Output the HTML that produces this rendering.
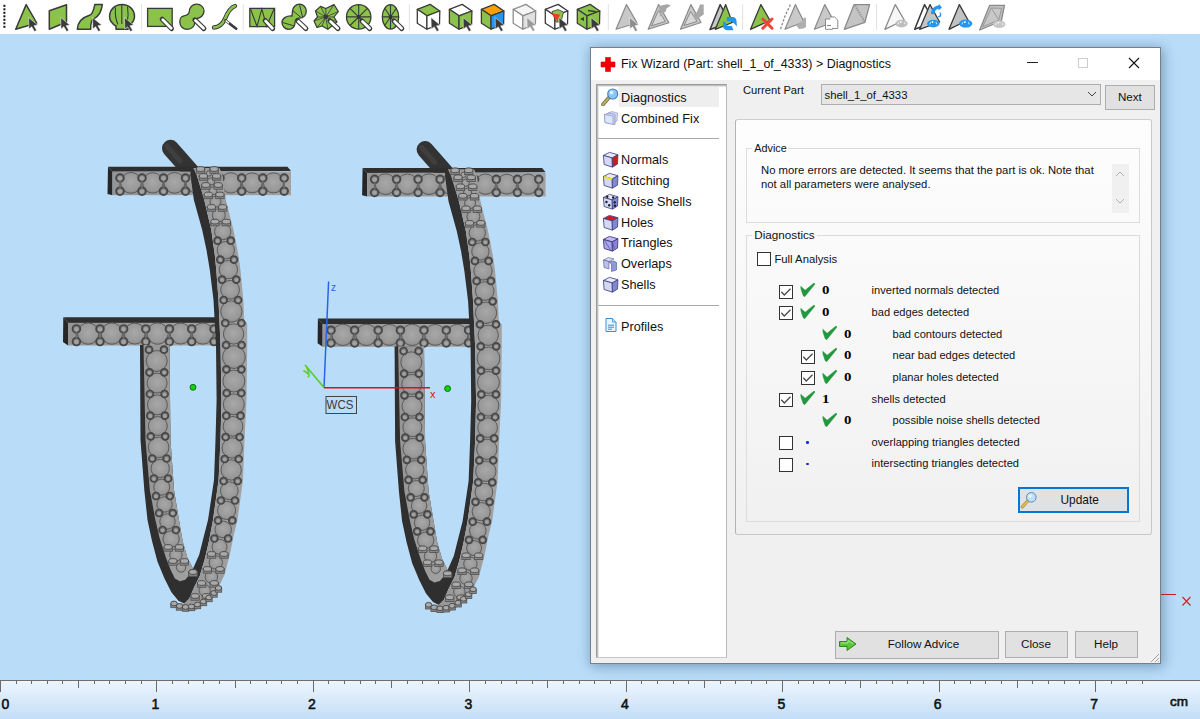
<!DOCTYPE html>
<html><head><meta charset="utf-8">
<style>
*{margin:0;padding:0;box-sizing:border-box}
html,body{width:1200px;height:719px;overflow:hidden;background:#B9DDF9;font-family:"Liberation Sans",sans-serif;color:#000}
.a{position:absolute}
#tb{left:0;top:0;width:1200px;height:34px;background:#fff}
#vp{left:0;top:34px;width:1200px;height:646px}
#ruler{left:0;top:680px;width:1200px;height:39px;background:linear-gradient(#E9F3FC,#D2E7F9 60%,#C3E0F8)}
.t{position:absolute;white-space:nowrap;line-height:1}
.btn{position:absolute;background:#E1E1E1;border:1px solid #ADADAD}
.cb{position:absolute;width:14px;height:14px;border:1px solid #333;background:#fff}
</style></head><body>
<svg class="a" style="left:0;top:0" width="1200" height="34" viewBox="0 0 1200 34"><rect width="1200" height="34" fill="#fff"/><rect x="3.4" y="4.8" width="2" height="2" fill="#111"/><rect x="3.4" y="8.3" width="2" height="2" fill="#111"/><rect x="3.4" y="11.8" width="2" height="2" fill="#111"/><rect x="3.4" y="15.3" width="2" height="2" fill="#111"/><rect x="3.4" y="18.8" width="2" height="2" fill="#111"/><rect x="3.4" y="22.3" width="2" height="2" fill="#111"/><rect x="3.4" y="25.8" width="2" height="2" fill="#111"/><path d="M26.15 4.6L36.75 23L15.75 29.3Z" fill="#8BC34A" stroke="#3A3A3A" stroke-width="1.5" stroke-linejoin="round"/><path d="M28.6 17.5L28.9 29.1L31.7 26.7L34.5 31.5L36.7 30.3L34.0 25.7L37.8 25.1Z" fill="#3A3A3A" stroke="#fff" stroke-width="0.5" stroke-linejoin="round"/><path d="M49.3 10.8L66.5 4.7L66.5 22L49.3 29.3Z" fill="#8BC34A" stroke="#3A3A3A" stroke-width="1.5" stroke-linejoin="round"/><path d="M60.7 17.5L61.0 29.1L63.8 26.7L66.6 31.5L68.8 30.3L66.1 25.7L69.9 25.1Z" fill="#3A3A3A" stroke="#fff" stroke-width="0.5" stroke-linejoin="round"/><path d="M77.3 29.3C77.6 22 82 17.5 89.5 15.2C93 14 94 8.5 94.8 4.6L102.3 4.6C101.5 11.5 98.5 16.5 93.5 19.2C91 20.5 90.6 25 90.7 29.3Z" fill="#8BC34A" stroke="#3A3A3A" stroke-width="1.5" stroke-linejoin="round"/><path d="M92.5 17.5L92.8 29.1L95.6 26.7L98.4 31.5L100.6 30.3L97.9 25.7L101.7 25.1Z" fill="#3A3A3A" stroke="#fff" stroke-width="0.5" stroke-linejoin="round"/><path d="M116 29.3L116 26C111.5 23.5 109.6 19.5 109.6 16.5C109.6 9.5 115 4.5 122 4.5C129 4.5 134.5 9.5 134.5 16.5C134.5 20 132.5 23.5 128.3 26L128.3 29.3Z" fill="#8BC34A" stroke="#3A3A3A" stroke-width="1.5" stroke-linejoin="round"/><path d="M115.5 7.5Q114.5 17 118 24.5M121.8 5V24M127.5 6.5Q129 15 127 23.5" stroke="#3A3A3A" stroke-width="1.1" fill="none"/><path d="M124.5 17.5L124.8 29.1L127.6 26.7L130.4 31.5L132.6 30.3L129.9 25.7L133.7 25.1Z" fill="#3A3A3A" stroke="#fff" stroke-width="0.5" stroke-linejoin="round"/><rect x="141.0" y="4" width="1" height="26" fill="#E3E3E3"/><rect x="147.6" y="8.4" width="24.6" height="18" fill="#8BC34A" stroke="#3A3A3A" stroke-width="1.3"/><path d="M162.2 19.2L171.5 28.6" stroke="#3A3A3A" stroke-width="5" stroke-linecap="round"/><path d="M162.8 19.8L171.2 28.3" stroke="#fff" stroke-width="2.8" stroke-linecap="round"/><path d="M184 15.8C180 16.5 179.8 19 179.8 22C179.8 26.3 183 29.3 187.3 29.3C191.8 29.3 195 26 194.8 22C194.8 19.5 195.5 18.6 197 18.5C201 18 204 15 204 11.1C204 7 200.8 4.2 196.6 4.2C192.5 4.2 189.4 7.2 189.3 11.3C189.2 14 188 15.3 184 15.8Z" fill="#8BC34A" stroke="#3A3A3A" stroke-width="1.3"/><path d="M194.89999999999998 19.9L203.9 28.6" stroke="#3A3A3A" stroke-width="5" stroke-linecap="round"/><path d="M195.5 20.5L203.6 28.3" stroke="#fff" stroke-width="2.8" stroke-linecap="round"/><path d="M214 27.5C220 27.5 222.5 24 224.8 19.3C227 13.5 229.5 8 235 6" stroke="#3A3A3A" stroke-width="4.4" stroke-linecap="round" fill="none"/><path d="M214 27.5C220 27.5 222.5 24 224.8 19.3C227 13.5 229.5 8 235 6" stroke="#8BC34A" stroke-width="2.4" stroke-linecap="round" fill="none"/><path d="M225.4 20.4L236.2 28.8" stroke="#3A3A3A" stroke-width="2.6" stroke-linecap="round"/><path d="M225.6 20.6L229 23.3" stroke="#fff" stroke-width="1.4"/><rect x="242.7" y="4" width="1" height="26" fill="#E3E3E3"/><rect x="249.8" y="8.4" width="24.8" height="18.2" fill="#8BC34A" stroke="#3A3A3A" stroke-width="1.3"/><path d="M250.5 9L257 26.3L261.8 9L266.7 26.3L274 9" stroke="#3A3A3A" stroke-width="1.1" fill="none"/><path d="M265.09999999999997 20.5L272.7 28.6" stroke="#3A3A3A" stroke-width="5" stroke-linecap="round"/><path d="M265.7 21.1L272.4 28.3" stroke="#fff" stroke-width="2.8" stroke-linecap="round"/><path d="M292 16C287 15.5 282 18 282 22.5C282 26.3 285 29.3 288.6 29.3C292.8 29.3 295.2 26 295 22.5C295 20 296 18.2 299.5 18.2C303.5 18.2 306.3 15 306.3 11.1C306.3 7.2 303.3 4.2 299.5 4.2C295.7 4.2 292.7 7.2 292.5 11Z" fill="#8BC34A" stroke="#3A3A3A" stroke-width="1.3"/><path d="M282.5 22.5L294.5 26M292.7 10.5L301 17.5M299.5 4.5L302.5 17" stroke="#3A3A3A" stroke-width="1" fill="none"/><path d="M297.8 21.0L305.9 28.6" stroke="#3A3A3A" stroke-width="5" stroke-linecap="round"/><path d="M298.40000000000003 21.6L305.59999999999997 28.3" stroke="#fff" stroke-width="2.8" stroke-linecap="round"/><path d="M315.5 11L320.5 6.4L325.8 8.5L334 4.6L338.4 11.5L334 17L337 22L332.5 25.5L327.8 29.3L322 26L317 27.5L314 21L317.5 17Z" fill="#8BC34A" stroke="#3A3A3A" stroke-width="1.2" stroke-linejoin="round"/><path d="M325.8 16.9L315.5 11" stroke="#3A3A3A" stroke-width="0.8"/><path d="M325.8 16.9L320.5 6.4" stroke="#3A3A3A" stroke-width="0.8"/><path d="M325.8 16.9L325.8 8.5" stroke="#3A3A3A" stroke-width="0.8"/><path d="M325.8 16.9L334 4.6" stroke="#3A3A3A" stroke-width="0.8"/><path d="M325.8 16.9L338.4 11.5" stroke="#3A3A3A" stroke-width="0.8"/><path d="M325.8 16.9L334 17" stroke="#3A3A3A" stroke-width="0.8"/><path d="M325.8 16.9L337 22" stroke="#3A3A3A" stroke-width="0.8"/><path d="M325.8 16.9L327.8 29.3" stroke="#3A3A3A" stroke-width="0.8"/><path d="M325.8 16.9L322 26" stroke="#3A3A3A" stroke-width="0.8"/><path d="M325.8 16.9L317 27.5" stroke="#3A3A3A" stroke-width="0.8"/><path d="M325.8 16.9L314 21" stroke="#3A3A3A" stroke-width="0.8"/><path d="M325.8 16.9L317.5 17" stroke="#3A3A3A" stroke-width="0.8"/><circle cx="325.8" cy="16.9" r="2.3" fill="#3A3A3A"/><path d="M329.9 21.0L338 28.6" stroke="#3A3A3A" stroke-width="5" stroke-linecap="round"/><path d="M330.5 21.6L337.7 28.3" stroke="#fff" stroke-width="2.8" stroke-linecap="round"/><circle cx="358.7" cy="16.9" r="12.2" fill="#8BC34A" stroke="#3A3A3A" stroke-width="1.3"/><path d="M346.5 16.9H370.9M358.7 4.7V29.1M350 8.3L367.4 25.5M367.4 8.3L350 25.5" stroke="#3A3A3A" stroke-width="1.1"/><rect x="357" y="15.2" width="3.4" height="3.4" fill="#333"/><path d="M361.9 21.0L369.8 28.6" stroke="#3A3A3A" stroke-width="5" stroke-linecap="round"/><path d="M362.5 21.6L369.5 28.3" stroke="#fff" stroke-width="2.8" stroke-linecap="round"/><ellipse cx="390.5" cy="16.9" rx="8.2" ry="12.2" fill="#8BC34A" stroke="#3A3A3A" stroke-width="1.3"/><path d="M382.3 16.9H398.7M390.5 4.7V29.1M384.7 8.3L396.3 25.5M396.3 8.3L384.7 25.5" stroke="#3A3A3A" stroke-width="1.1"/><rect x="388.8" y="15.2" width="3.4" height="3.4" fill="#333"/><path d="M394.0 21.0L401.8 28.6" stroke="#3A3A3A" stroke-width="5" stroke-linecap="round"/><path d="M394.6 21.6L401.5 28.3" stroke="#fff" stroke-width="2.8" stroke-linecap="round"/><rect x="408.9" y="4" width="1" height="26" fill="#E3E3E3"/><path d="M417.3 9.3L430.1 4.4L439.8 11.0L426.9 15.8Z" fill="#8BC34A" stroke="#3A3A3A" stroke-width="1.3" stroke-linejoin="round"/><path d="M417.3 9.3L426.9 15.8L426.9 29.2L417.3 23.3Z" fill="#fff" stroke="#3A3A3A" stroke-width="1.3" stroke-linejoin="round"/><path d="M426.9 15.8L439.8 11.0L439.5 24.5L426.9 29.2Z" fill="#fff" stroke="#3A3A3A" stroke-width="1.3" stroke-linejoin="round"/><path d="M431.0 17.5L431.3 29.1L434.1 26.7L436.9 31.5L439.1 30.3L436.4 25.7L440.2 25.1Z" fill="#3A3A3A" stroke="#fff" stroke-width="0.5" stroke-linejoin="round"/><path d="M449.4 9.3L462.2 4.4L471.9 11.0L459.0 15.8Z" fill="#fff" stroke="#3A3A3A" stroke-width="1.3" stroke-linejoin="round"/><path d="M449.4 9.3L459.0 15.8L459.0 29.2L449.4 23.3Z" fill="#8BC34A" stroke="#3A3A3A" stroke-width="1.3" stroke-linejoin="round"/><path d="M459.0 15.8L471.9 11.0L471.6 24.5L459.0 29.2Z" fill="#8BC34A" stroke="#3A3A3A" stroke-width="1.3" stroke-linejoin="round"/><path d="M463.1 17.5L463.4 29.1L466.2 26.7L469.0 31.5L471.2 30.3L468.5 25.7L472.3 25.1Z" fill="#3A3A3A" stroke="#fff" stroke-width="0.5" stroke-linejoin="round"/><path d="M481.4 9.3L494.2 4.4L503.9 11.0L491.0 15.8Z" fill="#F7A000" stroke="#3A3A3A" stroke-width="1.3" stroke-linejoin="round"/><path d="M481.4 9.3L491.0 15.8L491.0 29.2L481.4 23.3Z" fill="#8BC34A" stroke="#3A3A3A" stroke-width="1.3" stroke-linejoin="round"/><path d="M491.0 15.8L503.9 11.0L503.6 24.5L491.0 29.2Z" fill="#2196F3" stroke="#3A3A3A" stroke-width="1.3" stroke-linejoin="round"/><path d="M495.1 17.5L495.4 29.1L498.2 26.7L501.0 31.5L503.2 30.3L500.5 25.7L504.3 25.1Z" fill="#3A3A3A" stroke="#fff" stroke-width="0.5" stroke-linejoin="round"/><path d="M513.2 9.3L526.0 4.4L535.7 11.0L522.8 15.8Z" fill="#F6F6F6" stroke="#8E8E8E" stroke-width="1.3" stroke-linejoin="round"/><path d="M513.2 9.3L522.8 15.8L522.8 29.2L513.2 23.3Z" fill="#fff" stroke="#8E8E8E" stroke-width="1.3" stroke-linejoin="round"/><path d="M522.8 15.8L535.7 11.0L535.4 24.5L522.8 29.2Z" fill="#E0E0E0" stroke="#8E8E8E" stroke-width="1.3" stroke-linejoin="round"/><path d="M526.9 17.5L527.2 29.1L530.0 26.7L532.8 31.5L535.0 30.3L532.3 25.7L536.1 25.1Z" fill="#9A9A9A" stroke="#fff" stroke-width="0.5" stroke-linejoin="round"/><path d="M545.3 9.3L558.1 4.4L567.8 11.0L554.9 15.8Z" fill="#fff" stroke="#3A3A3A" stroke-width="1.3" stroke-linejoin="round"/><path d="M545.3 9.3L554.9 15.8L554.9 29.2L545.3 23.3Z" fill="#fff" stroke="#3A3A3A" stroke-width="1.3" stroke-linejoin="round"/><path d="M554.9 15.8L567.8 11.0L567.5 24.5L554.9 29.2Z" fill="#fff" stroke="#3A3A3A" stroke-width="1.3" stroke-linejoin="round"/><path d="M552 11.5L558 9.6L563.5 12L561 22L556 22Z" fill="#8BC34A" stroke="#3A3A3A" stroke-width="0.8"/><path d="M551.5 13.5L560 14.5L557.5 21.5Z" fill="#F03A2A"/><path d="M559.0 17.5L559.3 29.1L562.1 26.7L564.9 31.5L567.1 30.3L564.4 25.7L568.2 25.1Z" fill="#3A3A3A" stroke="#fff" stroke-width="0.5" stroke-linejoin="round"/><path d="M577.3 9.3L590.1 4.4L599.8 11.0L586.9 15.8Z" fill="#8BC34A" stroke="#3A3A3A" stroke-width="1.3" stroke-linejoin="round"/><path d="M577.3 9.3L586.9 15.8L586.9 29.2L577.3 23.3Z" fill="#8BC34A" stroke="#3A3A3A" stroke-width="1.3" stroke-linejoin="round"/><path d="M586.9 15.8L599.8 11.0L599.5 24.5L586.9 29.2Z" fill="#8BC34A" stroke="#3A3A3A" stroke-width="1.3" stroke-linejoin="round"/><path d="M588 10.5L596 11.8" stroke="#3A3A3A" stroke-width="1.5"/><path d="M580 19L584 17L584 21Z" fill="#3A3A3A"/><path d="M591.0 17.5L591.3 29.1L594.1 26.7L596.9 31.5L599.1 30.3L596.4 25.7L600.2 25.1Z" fill="#3A3A3A" stroke="#fff" stroke-width="0.5" stroke-linejoin="round"/><rect x="607.8" y="4" width="1" height="26" fill="#E3E3E3"/><path d="M626.5 4.6L637.1 23L616.1 29.3Z" fill="#C8C8C8" stroke="#8A8A8A" stroke-width="1.2" stroke-linejoin="round"/><path d="M629.5 17.5L629.8 29.1L632.6 26.7L635.4 31.5L637.6 30.3L634.9 25.7L638.7 25.1Z" fill="#8C8C8C" stroke="#fff" stroke-width="0.5" stroke-linejoin="round"/><path d="M658.6 4.6L668.9000000000001 22.8L648.2 29.3Z" fill="#C8C8C8" stroke="#8A8A8A" stroke-width="1.2" stroke-linejoin="round"/><path d="M651.5 25.8L658.6 10.5L665.4 21.5Z" fill="#D8D8D8" stroke="#8A8A8A" stroke-width="1"/><path d="M659 6L667 4.3L671 5.2L666.5 8.5L665.5 12L661.5 13L660 17Z" fill="#A6A6A6"/><path d="M690.9 4.6L701.0 22.5L680.5 29.3Z" fill="#C8C8C8" stroke="#8A8A8A" stroke-width="1.2" stroke-linejoin="round"/><path d="M684 25.5L690.6 11.5L697 21.5Z" fill="#D8D8D8" stroke="#8A8A8A" stroke-width="1"/><path d="M692.5 15.5L697 12L700 4.5L703.7 4.5L703.7 14.5L700 17L696 20Z" fill="#A8A8A8"/><path d="M720.2 4.6L730 22.5L710 29.5Z" fill="#C8C8C8" stroke="#3A3A3A" stroke-width="1.5" stroke-linejoin="round"/><path d="M725.6999999999999 4.6L732.3 22.5L715.3 29.3Z" fill="#8BC34A" stroke="#3A3A3A" stroke-width="1.3" stroke-linejoin="round"/><path d="M726.7 17H732.5C735.5 17 736.8 19.5 736.6 22.3L737 26.3L733.2 22.8L731.8 21.3H726.7Z" fill="#2196F3"/><path d="M723.2 21.3L726 22.8C726 24.6 727 26 729 26H731.8L733.5 30.2H727.5C724.3 30.2 722.9 28 723 25Z" fill="#2196F3"/><rect x="742.1" y="4" width="1" height="26" fill="#E3E3E3"/><path d="M760.9 4.6L770.0 20.5L750.5 29.3Z" fill="#8BC34A" stroke="#3A3A3A" stroke-width="1.3" stroke-linejoin="round"/><path d="M762.8 19L772 28.2M772 19L762.8 28.2" stroke="#F0443A" stroke-width="3" stroke-linecap="round"/><path d="M790.4 4.6L785 16L780.5 29.3" stroke="#8A8A8A" stroke-width="1.3" stroke-dasharray="2.4 1.6" fill="none"/><path d="M795.4 4.6L804 22L785 29.3Z" fill="#C9C9C9" stroke="#8A8A8A" stroke-width="1.2" stroke-linejoin="round"/><path d="M796.5 26L802 21L804 17.5L806 18L806 27L803.5 28.5L799 29Z" fill="#AFAFAF"/><path d="M824.8 4.6L834.4 22L814.4 29.3Z" fill="#C8C8C8" stroke="#8A8A8A" stroke-width="1.2" stroke-linejoin="round"/><path d="M825.5 19H831L832.5 20.5V29.3H825.5Z" fill="#fff" stroke="#8A8A8A" stroke-width="1"/><path d="M830 17H834.5L837.8 20V28.5H832.5" fill="#fff" stroke="#8A8A8A" stroke-width="1"/><path d="M827 25.5H831" stroke="#8A8A8A" stroke-width="1.2"/><path d="M854.1 4.6L869.6 4.6L864.9 22.3L844.3 29.3Z" fill="#C4C4C4" stroke="#8A8A8A" stroke-width="1.3" stroke-linejoin="round"/><path d="M855 5.5L864.5 21.5" stroke="#9A9A9A" stroke-width="2.2" stroke-dasharray="1.5 1"/><rect x="876.0" y="4" width="1" height="26" fill="#E3E3E3"/><path d="M895.3 4.6L904.1999999999999 20L884.9 29.3Z" fill="#F7F7F7" stroke="#8A8A8A" stroke-width="1.3" stroke-linejoin="round"/><ellipse cx="901.5" cy="23.6" rx="6.2" ry="3.8" fill="#BDBDBD"/><path d="M898.0 24.400000000000002Q898.3 22.6 899.0 22.1M905.0 24.400000000000002Q904.7 22.6 904.0 22.1" stroke="#fff" stroke-width="0.8" fill="none"/><circle cx="900.7" cy="22.0" r="0.9" fill="#fff"/><path d="M924.6 4.6L934 22L914.7 29.3Z" fill="#fff" stroke="#3A3A3A" stroke-width="1.5" stroke-linejoin="round"/><path d="M930.0 4.6L939.6 22L919.6 29.3Z" fill="#C4C4C4" stroke="#3A3A3A" stroke-width="1.3" stroke-linejoin="round"/><path d="M931 14C931 9 934.5 6 938.5 5.5L939 4L942 7.5L938.5 10.5L938.5 8.8C936 9.2 934.5 11 934.5 14Z" fill="#2196F3"/><path d="M939.5 12C941.5 12.5 942 14.5 940.5 17L937 17.5L940 15Z" fill="#2196F3"/><ellipse cx="933.3" cy="23.6" rx="6.2" ry="3.8" fill="#2196F3"/><path d="M929.8 24.400000000000002Q930.0999999999999 22.6 930.8 22.1M936.8 24.400000000000002Q936.5 22.6 935.8 22.1" stroke="#fff" stroke-width="0.8" fill="none"/><circle cx="932.5" cy="22.0" r="0.9" fill="#fff"/><path d="M959.4 4.6L968 20L949 29.3Z" fill="#C2C2C2" stroke="#3A3A3A" stroke-width="1.3" stroke-linejoin="round"/><ellipse cx="965.7" cy="23.6" rx="6.6" ry="4" fill="#2196F3"/><path d="M962.2 24.400000000000002Q962.5 22.6 963.2 22.1M969.2 24.400000000000002Q968.9000000000001 22.6 968.2 22.1" stroke="#fff" stroke-width="0.8" fill="none"/><circle cx="964.9000000000001" cy="22.0" r="0.9" fill="#fff"/><path d="M989.6 5.4L1004.5 5.4L1001.3 21L979.7 30Z" fill="#C0C0C0" stroke="#8A8A8A" stroke-width="1.3" stroke-linejoin="round"/><path d="M991.3 8L1001.6 8.4L998.8 20L982.8 26.5Z" fill="#C8C8C8" stroke="#9A9A9A" stroke-width="1"/><path d="M991.3 8L998.8 20" stroke="#9A9A9A" stroke-width="1"/><ellipse cx="999.2" cy="24.2" rx="6.2" ry="3.8" fill="#C6C6C6"/><path d="M995.7 25.0Q996.0 23.2 996.7 22.7M1002.7 25.0Q1002.4000000000001 23.2 1001.7 22.7" stroke="#fff" stroke-width="0.8" fill="none"/><circle cx="998.4000000000001" cy="22.599999999999998" r="0.9" fill="#fff"/></svg>
<svg id="vp" class="a" width="1200" height="646" viewBox="0 34 1200 646"><defs><linearGradient id="face" x1="0" y1="0" x2="1" y2="0"><stop offset="0" stop-color="#959595"/><stop offset="1" stop-color="#A2A2A2"/></linearGradient><radialGradient id="bead" cx="0.5" cy="0.45" r="0.62"><stop offset="0" stop-color="#A8A8A8"/><stop offset="0.7" stop-color="#989898"/><stop offset="1" stop-color="#7C7C7C"/></radialGradient></defs><g id="e1"><path d="M170.5 148.3L194 175" stroke="#333" stroke-width="17" stroke-linecap="round"/>
<path d="M167 146L180 161" stroke="#484848" stroke-width="5" stroke-linecap="round" opacity="0.6"/>
<path d="M108 166.8L287.5 166.8L291 171L112.5 171.8Z" fill="#2E2E2E"/>
<path d="M108 166.8L112.5 171.8L112.5 195.3L107.5 194Z" fill="#262626"/>
<rect x="112.5" y="171.6" width="178.5" height="23.6" fill="url(#face)"/>
<circle cx="131.0" cy="182.9" r="10.4" fill="url(#bead)" stroke="#555" stroke-width="0.9"/><circle cx="152.8" cy="182.9" r="10.2" fill="url(#bead)" stroke="#555" stroke-width="0.9"/><circle cx="174.5" cy="182.9" r="10.4" fill="url(#bead)" stroke="#555" stroke-width="0.9"/><circle cx="196.2" cy="182.9" r="10.2" fill="url(#bead)" stroke="#555" stroke-width="0.9"/><circle cx="213.5" cy="182.9" r="5.9" fill="url(#bead)" stroke="#555" stroke-width="0.9"/><circle cx="230.8" cy="182.9" r="10.2" fill="url(#bead)" stroke="#555" stroke-width="0.9"/><circle cx="252.2" cy="182.9" r="10.0" fill="url(#bead)" stroke="#555" stroke-width="0.9"/><circle cx="273.5" cy="182.9" r="10.1" fill="url(#bead)" stroke="#555" stroke-width="0.9"/><circle cx="120.0" cy="178.0" r="3.9" fill="#767676" stroke="#474747" stroke-width="1.7"/><circle cx="120.0" cy="178.3" r="2.3" fill="#A2A2A2"/><circle cx="120.0" cy="191.2" r="3.9" fill="#767676" stroke="#474747" stroke-width="1.7"/><circle cx="120.0" cy="191.5" r="2.3" fill="#A2A2A2"/><rect x="119.2" y="181.0" width="1.6" height="7.2" fill="#6A6A6A"/><circle cx="142.0" cy="178.0" r="3.9" fill="#767676" stroke="#474747" stroke-width="1.7"/><circle cx="142.0" cy="178.3" r="2.3" fill="#A2A2A2"/><circle cx="142.0" cy="191.2" r="3.9" fill="#767676" stroke="#474747" stroke-width="1.7"/><circle cx="142.0" cy="191.5" r="2.3" fill="#A2A2A2"/><rect x="141.2" y="181.0" width="1.6" height="7.2" fill="#6A6A6A"/><circle cx="163.5" cy="178.0" r="3.9" fill="#767676" stroke="#474747" stroke-width="1.7"/><circle cx="163.5" cy="178.3" r="2.3" fill="#A2A2A2"/><circle cx="163.5" cy="191.2" r="3.9" fill="#767676" stroke="#474747" stroke-width="1.7"/><circle cx="163.5" cy="191.5" r="2.3" fill="#A2A2A2"/><rect x="162.7" y="181.0" width="1.6" height="7.2" fill="#6A6A6A"/><circle cx="185.5" cy="178.0" r="3.9" fill="#767676" stroke="#474747" stroke-width="1.7"/><circle cx="185.5" cy="178.3" r="2.3" fill="#A2A2A2"/><circle cx="185.5" cy="191.2" r="3.9" fill="#767676" stroke="#474747" stroke-width="1.7"/><circle cx="185.5" cy="191.5" r="2.3" fill="#A2A2A2"/><rect x="184.7" y="181.0" width="1.6" height="7.2" fill="#6A6A6A"/><circle cx="207.0" cy="178.0" r="3.9" fill="#767676" stroke="#474747" stroke-width="1.7"/><circle cx="207.0" cy="178.3" r="2.3" fill="#A2A2A2"/><circle cx="207.0" cy="191.2" r="3.9" fill="#767676" stroke="#474747" stroke-width="1.7"/><circle cx="207.0" cy="191.5" r="2.3" fill="#A2A2A2"/><rect x="206.2" y="181.0" width="1.6" height="7.2" fill="#6A6A6A"/><circle cx="220.0" cy="178.0" r="3.9" fill="#767676" stroke="#474747" stroke-width="1.7"/><circle cx="220.0" cy="178.3" r="2.3" fill="#A2A2A2"/><circle cx="220.0" cy="191.2" r="3.9" fill="#767676" stroke="#474747" stroke-width="1.7"/><circle cx="220.0" cy="191.5" r="2.3" fill="#A2A2A2"/><rect x="219.2" y="181.0" width="1.6" height="7.2" fill="#6A6A6A"/><circle cx="241.7" cy="178.0" r="3.9" fill="#767676" stroke="#474747" stroke-width="1.7"/><circle cx="241.7" cy="178.3" r="2.3" fill="#A2A2A2"/><circle cx="241.7" cy="191.2" r="3.9" fill="#767676" stroke="#474747" stroke-width="1.7"/><circle cx="241.7" cy="191.5" r="2.3" fill="#A2A2A2"/><rect x="240.9" y="181.0" width="1.6" height="7.2" fill="#6A6A6A"/><circle cx="262.8" cy="178.0" r="3.9" fill="#767676" stroke="#474747" stroke-width="1.7"/><circle cx="262.8" cy="178.3" r="2.3" fill="#A2A2A2"/><circle cx="262.8" cy="191.2" r="3.9" fill="#767676" stroke="#474747" stroke-width="1.7"/><circle cx="262.8" cy="191.5" r="2.3" fill="#A2A2A2"/><rect x="262.0" y="181.0" width="1.6" height="7.2" fill="#6A6A6A"/><circle cx="284.2" cy="178.0" r="3.9" fill="#767676" stroke="#474747" stroke-width="1.7"/><circle cx="284.2" cy="178.3" r="2.3" fill="#A2A2A2"/><circle cx="284.2" cy="191.2" r="3.9" fill="#767676" stroke="#474747" stroke-width="1.7"/><circle cx="284.2" cy="191.5" r="2.3" fill="#A2A2A2"/><rect x="283.4" y="181.0" width="1.6" height="7.2" fill="#6A6A6A"/>
<path d="M63.3 317.3L216 317.3L216 323L68 323Z" fill="#2E2E2E"/>
<path d="M63.3 317.3L68 323L68 345.5L63 342Z" fill="#262626"/>
<rect x="68" y="322.8" width="148" height="22.7" fill="url(#face)"/>
<circle cx="88.2" cy="333.6" r="10.7" fill="url(#bead)" stroke="#555" stroke-width="0.9"/><circle cx="111.8" cy="333.6" r="10.7" fill="url(#bead)" stroke="#555" stroke-width="0.9"/><circle cx="134.7" cy="333.6" r="10.5" fill="url(#bead)" stroke="#555" stroke-width="0.9"/><circle cx="157.6" cy="333.6" r="10.7" fill="url(#bead)" stroke="#555" stroke-width="0.9"/><circle cx="180.6" cy="333.6" r="10.5" fill="url(#bead)" stroke="#555" stroke-width="0.9"/><circle cx="202.8" cy="333.6" r="10.6" fill="url(#bead)" stroke="#555" stroke-width="0.9"/><circle cx="76.4" cy="328.9" r="3.9" fill="#767676" stroke="#474747" stroke-width="1.7"/><circle cx="76.4" cy="329.2" r="2.3" fill="#A2A2A2"/><circle cx="76.4" cy="341.6" r="3.9" fill="#767676" stroke="#474747" stroke-width="1.7"/><circle cx="76.4" cy="341.9" r="2.3" fill="#A2A2A2"/><rect x="75.6" y="331.9" width="1.6" height="6.7" fill="#6A6A6A"/><circle cx="100.0" cy="328.9" r="3.9" fill="#767676" stroke="#474747" stroke-width="1.7"/><circle cx="100.0" cy="329.2" r="2.3" fill="#A2A2A2"/><circle cx="100.0" cy="341.6" r="3.9" fill="#767676" stroke="#474747" stroke-width="1.7"/><circle cx="100.0" cy="341.9" r="2.3" fill="#A2A2A2"/><rect x="99.2" y="331.9" width="1.6" height="6.7" fill="#6A6A6A"/><circle cx="123.6" cy="328.9" r="3.9" fill="#767676" stroke="#474747" stroke-width="1.7"/><circle cx="123.6" cy="329.2" r="2.3" fill="#A2A2A2"/><circle cx="123.6" cy="341.6" r="3.9" fill="#767676" stroke="#474747" stroke-width="1.7"/><circle cx="123.6" cy="341.9" r="2.3" fill="#A2A2A2"/><rect x="122.8" y="331.9" width="1.6" height="6.7" fill="#6A6A6A"/><circle cx="145.8" cy="328.9" r="3.9" fill="#767676" stroke="#474747" stroke-width="1.7"/><circle cx="145.8" cy="329.2" r="2.3" fill="#A2A2A2"/><circle cx="145.8" cy="341.6" r="3.9" fill="#767676" stroke="#474747" stroke-width="1.7"/><circle cx="145.8" cy="341.9" r="2.3" fill="#A2A2A2"/><rect x="145.0" y="331.9" width="1.6" height="6.7" fill="#6A6A6A"/><circle cx="169.4" cy="328.9" r="3.9" fill="#767676" stroke="#474747" stroke-width="1.7"/><circle cx="169.4" cy="329.2" r="2.3" fill="#A2A2A2"/><circle cx="169.4" cy="341.6" r="3.9" fill="#767676" stroke="#474747" stroke-width="1.7"/><circle cx="169.4" cy="341.9" r="2.3" fill="#A2A2A2"/><rect x="168.6" y="331.9" width="1.6" height="6.7" fill="#6A6A6A"/><circle cx="191.7" cy="328.9" r="3.9" fill="#767676" stroke="#474747" stroke-width="1.7"/><circle cx="191.7" cy="329.2" r="2.3" fill="#A2A2A2"/><circle cx="191.7" cy="341.6" r="3.9" fill="#767676" stroke="#474747" stroke-width="1.7"/><circle cx="191.7" cy="341.9" r="2.3" fill="#A2A2A2"/><rect x="190.9" y="331.9" width="1.6" height="6.7" fill="#6A6A6A"/><circle cx="214.0" cy="328.9" r="3.9" fill="#767676" stroke="#474747" stroke-width="1.7"/><circle cx="214.0" cy="329.2" r="2.3" fill="#A2A2A2"/><circle cx="214.0" cy="341.6" r="3.9" fill="#767676" stroke="#474747" stroke-width="1.7"/><circle cx="214.0" cy="341.9" r="2.3" fill="#A2A2A2"/><rect x="213.2" y="331.9" width="1.6" height="6.7" fill="#6A6A6A"/>
<path d="M140.0 345.0 L140.5 440.0 L144.3 490.0 L147.5 520.0 L152.0 540.9 L157.5 561.7 L164.5 578.4 L171.4 592.3 L178.4 600.7 L185.3 604.1 L189.5 602.0 L189.5 597.9 L194.4 586.8 L199.9 575.6 L204.8 559.0 L209.0 540.9 L213.0 520.0 L218.6 480.0 L220.5 440.0 L221.5 400.0 L220.5 345.0 L218.5 300.0 L216.3 270.0 L214.8 255.0 L211.3 230.0 L204.3 200.0 L196.7 175.0 L193.3 168.0 L190.6 171.0 L190.6 171.0 L190.4 175.0 L193.9 200.0 L202.2 230.0 L206.5 250.0 L209.8 270.0 L213.5 300.0 L216.0 345.0 L216.6 400.0 L215.5 440.0 L214.0 480.0 L208.0 520.0 L203.4 538.0 L199.2 554.8 L193.0 568.7 L193.0 568.7 L187.4 557.5 L182.6 540.9 L179.0 520.0 L174.0 490.0 L170.5 440.0 L169.4 345.0 Z" fill="#2F2F2F"/>
<path d="M143.5 345.0 L145.5 440.0 L149.8 490.0 L155.4 520.0 L159.6 538.0 L165.9 557.5 L170.7 570.0 L174.9 578.4 L179.8 581.2 L185.3 579.8 L190.9 572.9 L193.0 568.7 L193.0 568.7 L187.4 557.5 L182.6 540.9 L179.0 520.0 L174.0 490.0 L170.5 440.0 L169.4 345.0 Z" fill="url(#face)"/>
<circle cx="156.7" cy="361.0" r="10.5" fill="url(#bead)" stroke="#555" stroke-width="0.9"/><circle cx="157.1" cy="383.1" r="10.0" fill="url(#bead)" stroke="#555" stroke-width="0.9"/><circle cx="157.4" cy="404.9" r="10.0" fill="url(#bead)" stroke="#555" stroke-width="0.9"/><circle cx="157.8" cy="426.0" r="9.5" fill="url(#bead)" stroke="#555" stroke-width="0.9"/><circle cx="158.6" cy="447.4" r="10.3" fill="url(#bead)" stroke="#555" stroke-width="0.9"/><circle cx="160.2" cy="468.5" r="9.2" fill="url(#bead)" stroke="#555" stroke-width="0.9"/><circle cx="161.7" cy="487.2" r="8.0" fill="url(#bead)" stroke="#555" stroke-width="0.9"/><circle cx="164.5" cy="504.5" r="7.7" fill="url(#bead)" stroke="#555" stroke-width="0.9"/><circle cx="167.5" cy="521.5" r="7.7" fill="url(#bead)" stroke="#555" stroke-width="0.9"/><circle cx="171.1" cy="539.0" r="8.2" fill="url(#bead)" stroke="#555" stroke-width="0.9"/><circle cx="175.9" cy="555.0" r="6.2" fill="url(#bead)" stroke="#555" stroke-width="0.9"/><circle cx="181.1" cy="567.5" r="4.7" fill="url(#bead)" stroke="#555" stroke-width="0.9"/><circle cx="149.0" cy="349.7" r="3.5" fill="#767676" stroke="#474747" stroke-width="1.7"/><circle cx="149.0" cy="350.0" r="1.9" fill="#A2A2A2"/><circle cx="164.0" cy="349.7" r="3.5" fill="#767676" stroke="#474747" stroke-width="1.7"/><circle cx="164.0" cy="350.0" r="1.9" fill="#A2A2A2"/><circle cx="149.5" cy="372.3" r="3.5" fill="#767676" stroke="#474747" stroke-width="1.7"/><circle cx="149.5" cy="372.6" r="1.9" fill="#A2A2A2"/><circle cx="164.3" cy="372.3" r="3.5" fill="#767676" stroke="#474747" stroke-width="1.7"/><circle cx="164.3" cy="372.6" r="1.9" fill="#A2A2A2"/><circle cx="149.9" cy="394.0" r="3.5" fill="#767676" stroke="#474747" stroke-width="1.7"/><circle cx="149.9" cy="394.3" r="1.9" fill="#A2A2A2"/><circle cx="164.6" cy="394.0" r="3.5" fill="#767676" stroke="#474747" stroke-width="1.7"/><circle cx="164.6" cy="394.3" r="1.9" fill="#A2A2A2"/><circle cx="150.3" cy="415.7" r="3.5" fill="#767676" stroke="#474747" stroke-width="1.7"/><circle cx="150.3" cy="416.0" r="1.9" fill="#A2A2A2"/><circle cx="164.9" cy="415.7" r="3.5" fill="#767676" stroke="#474747" stroke-width="1.7"/><circle cx="164.9" cy="416.0" r="1.9" fill="#A2A2A2"/><circle cx="150.7" cy="436.3" r="3.5" fill="#767676" stroke="#474747" stroke-width="1.7"/><circle cx="150.7" cy="436.6" r="1.9" fill="#A2A2A2"/><circle cx="165.2" cy="436.3" r="3.5" fill="#767676" stroke="#474747" stroke-width="1.7"/><circle cx="165.2" cy="436.6" r="1.9" fill="#A2A2A2"/><circle cx="152.3" cy="458.5" r="3.5" fill="#767676" stroke="#474747" stroke-width="1.7"/><circle cx="152.3" cy="458.8" r="1.9" fill="#A2A2A2"/><circle cx="166.6" cy="458.5" r="3.5" fill="#767676" stroke="#474747" stroke-width="1.7"/><circle cx="166.6" cy="458.8" r="1.9" fill="#A2A2A2"/><circle cx="153.9" cy="478.5" r="3.5" fill="#767676" stroke="#474747" stroke-width="1.7"/><circle cx="153.9" cy="478.8" r="1.9" fill="#A2A2A2"/><circle cx="168.1" cy="478.5" r="3.5" fill="#767676" stroke="#474747" stroke-width="1.7"/><circle cx="168.1" cy="478.8" r="1.9" fill="#A2A2A2"/><circle cx="156.0" cy="496.0" r="3.5" fill="#767676" stroke="#474747" stroke-width="1.7"/><circle cx="156.0" cy="496.3" r="1.9" fill="#A2A2A2"/><circle cx="169.9" cy="496.0" r="3.5" fill="#767676" stroke="#474747" stroke-width="1.7"/><circle cx="169.9" cy="496.3" r="1.9" fill="#A2A2A2"/><circle cx="159.1" cy="513.0" r="3.5" fill="#767676" stroke="#474747" stroke-width="1.7"/><circle cx="159.1" cy="513.3" r="1.9" fill="#A2A2A2"/><circle cx="172.8" cy="513.0" r="3.5" fill="#767676" stroke="#474747" stroke-width="1.7"/><circle cx="172.8" cy="513.3" r="1.9" fill="#A2A2A2"/><circle cx="162.6" cy="530.0" r="3.5" fill="#767676" stroke="#474747" stroke-width="1.7"/><circle cx="162.6" cy="530.3" r="1.9" fill="#A2A2A2"/><circle cx="175.9" cy="530.0" r="3.5" fill="#767676" stroke="#474747" stroke-width="1.7"/><circle cx="175.9" cy="530.3" r="1.9" fill="#A2A2A2"/><rect x="163.9" y="547.0" width="8.4" height="4.2" fill="#8A8A8A" stroke="#505050" stroke-width="0.8"/><ellipse cx="168.1" cy="547.0" rx="4.2" ry="2.4" fill="#A9A9A9" stroke="#4E4E4E" stroke-width="1"/><rect x="175.2" y="547.0" width="8.4" height="4.2" fill="#8A8A8A" stroke="#505050" stroke-width="0.8"/><ellipse cx="179.4" cy="547.0" rx="4.2" ry="2.4" fill="#A9A9A9" stroke="#4E4E4E" stroke-width="1"/><rect x="168.7" y="561.0" width="8.4" height="4.2" fill="#8A8A8A" stroke="#505050" stroke-width="0.8"/><ellipse cx="172.9" cy="561.0" rx="4.2" ry="2.4" fill="#A9A9A9" stroke="#4E4E4E" stroke-width="1"/><rect x="180.2" y="561.0" width="8.4" height="4.2" fill="#8A8A8A" stroke="#505050" stroke-width="0.8"/><ellipse cx="184.4" cy="561.0" rx="4.2" ry="2.4" fill="#A9A9A9" stroke="#4E4E4E" stroke-width="1"/><rect x="188.8" y="572.0" width="8.4" height="4.2" fill="#8A8A8A" stroke="#505050" stroke-width="0.8"/><ellipse cx="193.0" cy="572.0" rx="4.2" ry="2.4" fill="#A9A9A9" stroke="#4E4E4E" stroke-width="1"/><rect x="188.8" y="572.0" width="8.4" height="4.2" fill="#8A8A8A" stroke="#505050" stroke-width="0.8"/><ellipse cx="193.0" cy="572.0" rx="4.2" ry="2.4" fill="#A9A9A9" stroke="#4E4E4E" stroke-width="1"/>
<path d="M193.3 168.0 L196.7 175.0 L204.3 200.0 L211.3 230.0 L214.8 255.0 L216.3 270.0 L218.5 300.0 L220.5 345.0 L221.5 400.0 L220.5 440.0 L218.6 480.0 L213.0 520.0 L209.0 540.9 L204.8 559.0 L199.9 575.6 L194.4 586.8 L189.5 597.9 L184.0 603.5 L171.5 604.0 L177.0 609.0 L186.0 611.5 L196.0 610.0 L204.0 605.0 L211.0 598.0 L217.3 589.5 L224.3 575.6 L229.8 554.8 L234.0 533.9 L237.5 520.0 L243.0 480.0 L244.5 440.0 L246.5 400.0 L247.2 345.0 L247.2 323.0 L244.3 321.0 L243.3 300.0 L240.5 270.0 L238.4 255.0 L233.5 230.0 L225.9 200.0 L222.4 175.0 L219.5 168.0 Z" fill="url(#face)"/>
<circle cx="208.9" cy="173.5" r="2.7" fill="url(#bead)" stroke="#555" stroke-width="0.9"/><circle cx="211.0" cy="181.5" r="3.7" fill="url(#bead)" stroke="#555" stroke-width="0.9"/><circle cx="213.0" cy="190.8" r="4.0" fill="url(#bead)" stroke="#555" stroke-width="0.9"/><circle cx="215.5" cy="201.8" r="5.5" fill="url(#bead)" stroke="#555" stroke-width="0.9"/><circle cx="218.8" cy="215.3" r="6.5" fill="url(#bead)" stroke="#555" stroke-width="0.9"/><circle cx="222.7" cy="231.6" r="8.2" fill="url(#bead)" stroke="#555" stroke-width="0.9"/><circle cx="225.8" cy="250.2" r="8.7" fill="url(#bead)" stroke="#555" stroke-width="0.9"/><circle cx="228.4" cy="269.6" r="9.2" fill="url(#bead)" stroke="#555" stroke-width="0.9"/><circle cx="230.1" cy="289.8" r="9.4" fill="url(#bead)" stroke="#555" stroke-width="0.9"/><circle cx="231.4" cy="311.5" r="10.7" fill="url(#bead)" stroke="#555" stroke-width="0.9"/><circle cx="233.6" cy="334.0" r="10.2" fill="url(#bead)" stroke="#555" stroke-width="0.9"/><circle cx="233.9" cy="357.1" r="11.4" fill="url(#bead)" stroke="#555" stroke-width="0.9"/><circle cx="233.9" cy="381.1" r="11.0" fill="url(#bead)" stroke="#555" stroke-width="0.9"/><circle cx="233.8" cy="404.4" r="10.5" fill="url(#bead)" stroke="#555" stroke-width="0.9"/><circle cx="233.0" cy="426.4" r="9.9" fill="url(#bead)" stroke="#555" stroke-width="0.9"/><circle cx="232.2" cy="448.0" r="10.2" fill="url(#bead)" stroke="#555" stroke-width="0.9"/><circle cx="231.2" cy="470.0" r="10.2" fill="url(#bead)" stroke="#555" stroke-width="0.9"/><circle cx="229.3" cy="490.8" r="8.9" fill="url(#bead)" stroke="#555" stroke-width="0.9"/><circle cx="226.6" cy="510.4" r="9.1" fill="url(#bead)" stroke="#555" stroke-width="0.9"/><circle cx="223.2" cy="529.5" r="8.3" fill="url(#bead)" stroke="#555" stroke-width="0.9"/><circle cx="219.5" cy="546.8" r="7.5" fill="url(#bead)" stroke="#555" stroke-width="0.9"/><circle cx="215.8" cy="562.5" r="6.7" fill="url(#bead)" stroke="#555" stroke-width="0.9"/><circle cx="211.4" cy="577.0" r="6.2" fill="url(#bead)" stroke="#555" stroke-width="0.9"/><circle cx="204.7" cy="590.5" r="5.7" fill="url(#bead)" stroke="#555" stroke-width="0.9"/><rect x="196.3" y="169.0" width="8.4" height="4.2" fill="#8A8A8A" stroke="#505050" stroke-width="0.8"/><ellipse cx="200.5" cy="169.0" rx="4.2" ry="2.4" fill="#A9A9A9" stroke="#4E4E4E" stroke-width="1"/><rect x="209.9" y="169.0" width="8.4" height="4.2" fill="#8A8A8A" stroke="#505050" stroke-width="0.8"/><ellipse cx="214.1" cy="169.0" rx="4.2" ry="2.4" fill="#A9A9A9" stroke="#4E4E4E" stroke-width="1"/><rect x="199.2" y="176.0" width="8.4" height="4.2" fill="#8A8A8A" stroke="#505050" stroke-width="0.8"/><ellipse cx="203.4" cy="176.0" rx="4.2" ry="2.4" fill="#A9A9A9" stroke="#4E4E4E" stroke-width="1"/><rect x="212.4" y="176.0" width="8.4" height="4.2" fill="#8A8A8A" stroke="#505050" stroke-width="0.8"/><ellipse cx="216.6" cy="176.0" rx="4.2" ry="2.4" fill="#A9A9A9" stroke="#4E4E4E" stroke-width="1"/><rect x="201.6" y="185.0" width="8.4" height="4.2" fill="#8A8A8A" stroke="#505050" stroke-width="0.8"/><ellipse cx="205.8" cy="185.0" rx="4.2" ry="2.4" fill="#A9A9A9" stroke="#4E4E4E" stroke-width="1"/><rect x="214.0" y="185.0" width="8.4" height="4.2" fill="#8A8A8A" stroke="#505050" stroke-width="0.8"/><ellipse cx="218.2" cy="185.0" rx="4.2" ry="2.4" fill="#A9A9A9" stroke="#4E4E4E" stroke-width="1"/><rect x="204.1" y="194.5" width="8.4" height="4.2" fill="#8A8A8A" stroke="#505050" stroke-width="0.8"/><ellipse cx="208.3" cy="194.5" rx="4.2" ry="2.4" fill="#A9A9A9" stroke="#4E4E4E" stroke-width="1"/><rect x="215.7" y="194.5" width="8.4" height="4.2" fill="#8A8A8A" stroke="#505050" stroke-width="0.8"/><ellipse cx="219.9" cy="194.5" rx="4.2" ry="2.4" fill="#A9A9A9" stroke="#4E4E4E" stroke-width="1"/><rect x="207.2" y="207.0" width="8.4" height="4.2" fill="#8A8A8A" stroke="#505050" stroke-width="0.8"/><ellipse cx="211.4" cy="207.0" rx="4.2" ry="2.4" fill="#A9A9A9" stroke="#4E4E4E" stroke-width="1"/><rect x="218.5" y="207.0" width="8.4" height="4.2" fill="#8A8A8A" stroke="#505050" stroke-width="0.8"/><ellipse cx="222.7" cy="207.0" rx="4.2" ry="2.4" fill="#A9A9A9" stroke="#4E4E4E" stroke-width="1"/><rect x="210.7" y="221.6" width="8.4" height="4.2" fill="#8A8A8A" stroke="#505050" stroke-width="0.8"/><ellipse cx="214.9" cy="221.6" rx="4.2" ry="2.4" fill="#A9A9A9" stroke="#4E4E4E" stroke-width="1"/><rect x="222.1" y="221.6" width="8.4" height="4.2" fill="#8A8A8A" stroke="#505050" stroke-width="0.8"/><ellipse cx="226.3" cy="221.6" rx="4.2" ry="2.4" fill="#A9A9A9" stroke="#4E4E4E" stroke-width="1"/><circle cx="217.6" cy="240.7" r="3.5" fill="#767676" stroke="#474747" stroke-width="1.7"/><circle cx="217.6" cy="241.0" r="1.9" fill="#A2A2A2"/><circle cx="230.8" cy="240.7" r="3.5" fill="#767676" stroke="#474747" stroke-width="1.7"/><circle cx="230.8" cy="241.0" r="1.9" fill="#A2A2A2"/><circle cx="220.3" cy="259.6" r="3.5" fill="#767676" stroke="#474747" stroke-width="1.7"/><circle cx="220.3" cy="259.9" r="1.9" fill="#A2A2A2"/><circle cx="234.0" cy="259.6" r="3.5" fill="#767676" stroke="#474747" stroke-width="1.7"/><circle cx="234.0" cy="259.9" r="1.9" fill="#A2A2A2"/><circle cx="222.1" cy="279.6" r="3.5" fill="#767676" stroke="#474747" stroke-width="1.7"/><circle cx="222.1" cy="279.9" r="1.9" fill="#A2A2A2"/><circle cx="236.3" cy="279.6" r="3.5" fill="#767676" stroke="#474747" stroke-width="1.7"/><circle cx="236.3" cy="279.9" r="1.9" fill="#A2A2A2"/><circle cx="223.7" cy="300.0" r="3.5" fill="#767676" stroke="#474747" stroke-width="1.7"/><circle cx="223.7" cy="300.3" r="1.9" fill="#A2A2A2"/><circle cx="238.1" cy="300.0" r="3.5" fill="#767676" stroke="#474747" stroke-width="1.7"/><circle cx="238.1" cy="300.3" r="1.9" fill="#A2A2A2"/><circle cx="225.3" cy="323.0" r="3.5" fill="#767676" stroke="#474747" stroke-width="1.7"/><circle cx="225.3" cy="323.3" r="1.9" fill="#A2A2A2"/><circle cx="241.4" cy="323.0" r="3.5" fill="#767676" stroke="#474747" stroke-width="1.7"/><circle cx="241.4" cy="323.3" r="1.9" fill="#A2A2A2"/><circle cx="226.1" cy="345.0" r="3.5" fill="#767676" stroke="#474747" stroke-width="1.7"/><circle cx="226.1" cy="345.3" r="1.9" fill="#A2A2A2"/><circle cx="241.6" cy="345.0" r="3.5" fill="#767676" stroke="#474747" stroke-width="1.7"/><circle cx="241.6" cy="345.3" r="1.9" fill="#A2A2A2"/><circle cx="226.4" cy="369.3" r="3.5" fill="#767676" stroke="#474747" stroke-width="1.7"/><circle cx="226.4" cy="369.6" r="1.9" fill="#A2A2A2"/><circle cx="241.4" cy="369.3" r="3.5" fill="#767676" stroke="#474747" stroke-width="1.7"/><circle cx="241.4" cy="369.6" r="1.9" fill="#A2A2A2"/><circle cx="226.7" cy="393.0" r="3.5" fill="#767676" stroke="#474747" stroke-width="1.7"/><circle cx="226.7" cy="393.3" r="1.9" fill="#A2A2A2"/><circle cx="241.3" cy="393.0" r="3.5" fill="#767676" stroke="#474747" stroke-width="1.7"/><circle cx="241.3" cy="393.3" r="1.9" fill="#A2A2A2"/><circle cx="226.3" cy="415.7" r="3.5" fill="#767676" stroke="#474747" stroke-width="1.7"/><circle cx="226.3" cy="416.0" r="1.9" fill="#A2A2A2"/><circle cx="240.5" cy="415.7" r="3.5" fill="#767676" stroke="#474747" stroke-width="1.7"/><circle cx="240.5" cy="416.0" r="1.9" fill="#A2A2A2"/><circle cx="225.6" cy="437.0" r="3.5" fill="#767676" stroke="#474747" stroke-width="1.7"/><circle cx="225.6" cy="437.3" r="1.9" fill="#A2A2A2"/><circle cx="239.6" cy="437.0" r="3.5" fill="#767676" stroke="#474747" stroke-width="1.7"/><circle cx="239.6" cy="437.3" r="1.9" fill="#A2A2A2"/><circle cx="224.7" cy="459.0" r="3.5" fill="#767676" stroke="#474747" stroke-width="1.7"/><circle cx="224.7" cy="459.3" r="1.9" fill="#A2A2A2"/><circle cx="238.7" cy="459.0" r="3.5" fill="#767676" stroke="#474747" stroke-width="1.7"/><circle cx="238.7" cy="459.3" r="1.9" fill="#A2A2A2"/><circle cx="223.6" cy="481.0" r="3.5" fill="#767676" stroke="#474747" stroke-width="1.7"/><circle cx="223.6" cy="481.3" r="1.9" fill="#A2A2A2"/><circle cx="237.7" cy="481.0" r="3.5" fill="#767676" stroke="#474747" stroke-width="1.7"/><circle cx="237.7" cy="481.3" r="1.9" fill="#A2A2A2"/><circle cx="220.9" cy="500.5" r="3.5" fill="#767676" stroke="#474747" stroke-width="1.7"/><circle cx="220.9" cy="500.8" r="1.9" fill="#A2A2A2"/><circle cx="235.0" cy="500.5" r="3.5" fill="#767676" stroke="#474747" stroke-width="1.7"/><circle cx="235.0" cy="500.8" r="1.9" fill="#A2A2A2"/><circle cx="218.1" cy="520.4" r="3.5" fill="#767676" stroke="#474747" stroke-width="1.7"/><circle cx="218.1" cy="520.7" r="1.9" fill="#A2A2A2"/><circle cx="232.3" cy="520.4" r="3.5" fill="#767676" stroke="#474747" stroke-width="1.7"/><circle cx="232.3" cy="520.7" r="1.9" fill="#A2A2A2"/><circle cx="214.4" cy="538.5" r="3.5" fill="#767676" stroke="#474747" stroke-width="1.7"/><circle cx="214.4" cy="538.8" r="1.9" fill="#A2A2A2"/><circle cx="228.1" cy="538.5" r="3.5" fill="#767676" stroke="#474747" stroke-width="1.7"/><circle cx="228.1" cy="538.8" r="1.9" fill="#A2A2A2"/><rect x="207.3" y="554.0" width="8.4" height="4.2" fill="#8A8A8A" stroke="#505050" stroke-width="0.8"/><ellipse cx="211.5" cy="554.0" rx="4.2" ry="2.4" fill="#A9A9A9" stroke="#4E4E4E" stroke-width="1"/><rect x="219.8" y="554.0" width="8.4" height="4.2" fill="#8A8A8A" stroke="#505050" stroke-width="0.8"/><ellipse cx="224.0" cy="554.0" rx="4.2" ry="2.4" fill="#A9A9A9" stroke="#4E4E4E" stroke-width="1"/><rect x="203.2" y="569.0" width="8.4" height="4.2" fill="#8A8A8A" stroke="#505050" stroke-width="0.8"/><ellipse cx="207.4" cy="569.0" rx="4.2" ry="2.4" fill="#A9A9A9" stroke="#4E4E4E" stroke-width="1"/><rect x="215.8" y="569.0" width="8.4" height="4.2" fill="#8A8A8A" stroke="#505050" stroke-width="0.8"/><ellipse cx="220.0" cy="569.0" rx="4.2" ry="2.4" fill="#A9A9A9" stroke="#4E4E4E" stroke-width="1"/><rect x="197.4" y="583.0" width="8.4" height="4.2" fill="#8A8A8A" stroke="#505050" stroke-width="0.8"/><ellipse cx="201.6" cy="583.0" rx="4.2" ry="2.4" fill="#A9A9A9" stroke="#4E4E4E" stroke-width="1"/><rect x="210.0" y="583.0" width="8.4" height="4.2" fill="#8A8A8A" stroke="#505050" stroke-width="0.8"/><ellipse cx="214.2" cy="583.0" rx="4.2" ry="2.4" fill="#A9A9A9" stroke="#4E4E4E" stroke-width="1"/><rect x="190.9" y="596.0" width="8.4" height="4.2" fill="#8A8A8A" stroke="#505050" stroke-width="0.8"/><ellipse cx="195.1" cy="596.0" rx="4.2" ry="2.4" fill="#A9A9A9" stroke="#4E4E4E" stroke-width="1"/><rect x="202.3" y="596.0" width="8.4" height="4.2" fill="#8A8A8A" stroke="#505050" stroke-width="0.8"/><ellipse cx="206.5" cy="596.0" rx="4.2" ry="2.4" fill="#A9A9A9" stroke="#4E4E4E" stroke-width="1"/>
<rect x="170.8" y="603.5" width="6.4" height="4.2" fill="#8A8A8A" stroke="#505050" stroke-width="0.8"/><ellipse cx="174.0" cy="603.5" rx="3.2" ry="2.4" fill="#A9A9A9" stroke="#4E4E4E" stroke-width="1"/>
<rect x="176.3" y="606.0" width="6.4" height="4.2" fill="#8A8A8A" stroke="#505050" stroke-width="0.8"/><ellipse cx="179.5" cy="606.0" rx="3.2" ry="2.4" fill="#A9A9A9" stroke="#4E4E4E" stroke-width="1"/>
<rect x="182.3" y="607.0" width="6.4" height="4.2" fill="#8A8A8A" stroke="#505050" stroke-width="0.8"/><ellipse cx="185.5" cy="607.0" rx="3.2" ry="2.4" fill="#A9A9A9" stroke="#4E4E4E" stroke-width="1"/>
<rect x="188.3" y="606.5" width="6.4" height="4.2" fill="#8A8A8A" stroke="#505050" stroke-width="0.8"/><ellipse cx="191.5" cy="606.5" rx="3.2" ry="2.4" fill="#A9A9A9" stroke="#4E4E4E" stroke-width="1"/>
<rect x="194.3" y="604.5" width="6.4" height="4.2" fill="#8A8A8A" stroke="#505050" stroke-width="0.8"/><ellipse cx="197.5" cy="604.5" rx="3.2" ry="2.4" fill="#A9A9A9" stroke="#4E4E4E" stroke-width="1"/>
<rect x="200.3" y="601.5" width="6.4" height="4.2" fill="#8A8A8A" stroke="#505050" stroke-width="0.8"/><ellipse cx="203.5" cy="601.5" rx="3.2" ry="2.4" fill="#A9A9A9" stroke="#4E4E4E" stroke-width="1"/>
<rect x="205.8" y="597.5" width="6.4" height="4.2" fill="#8A8A8A" stroke="#505050" stroke-width="0.8"/><ellipse cx="209.0" cy="597.5" rx="3.2" ry="2.4" fill="#A9A9A9" stroke="#4E4E4E" stroke-width="1"/>
<rect x="210.8" y="593.0" width="6.4" height="4.2" fill="#8A8A8A" stroke="#505050" stroke-width="0.8"/><ellipse cx="214.0" cy="593.0" rx="3.2" ry="2.4" fill="#A9A9A9" stroke="#4E4E4E" stroke-width="1"/>
<rect x="215.3" y="588.0" width="6.4" height="4.2" fill="#8A8A8A" stroke="#505050" stroke-width="0.8"/><ellipse cx="218.5" cy="588.0" rx="3.2" ry="2.4" fill="#A9A9A9" stroke="#4E4E4E" stroke-width="1"/>
<circle cx="193" cy="387.3" r="3" fill="#10D010" stroke="#0A5A0A" stroke-width="0.8"/></g><use href="#e1" transform="translate(254.6,1.3)"/><path d="M324 388L328.6 281.5" stroke="#2B63E8" stroke-width="1.5"/><path d="M324 387.7L430 387.7" stroke="#E01010" stroke-width="1.6"/><path d="M324 387.5L305 365" stroke="#55CC22" stroke-width="1.6"/><text x="331" y="291" font-family="Liberation Sans" font-size="10" fill="#2B63E8">z</text><text x="430" y="398" font-family="Liberation Sans" font-size="11" fill="#E01010">x</text><text x="303.5" y="374" font-family="Liberation Sans" font-size="11" fill="#55CC22" stroke="#55CC22" stroke-width="0.5" transform="rotate(-35 308 370)">y</text><rect x="326" y="396.5" width="30.5" height="17" fill="none" stroke="#444" stroke-width="1"/><text x="326.6" y="409.2" font-family="Liberation Sans" font-size="12.2" fill="#3A3A3A" textLength="26.8" lengthAdjust="spacingAndGlyphs">WCS</text><path d="M1161 594.5L1176 594.5" stroke="#D02020" stroke-width="1"/><path d="M1182.5 597L1190.5 605.5M1190.5 597L1182.5 605.5" stroke="#D02020" stroke-width="1.1"/></svg>
<svg class="a" style="left:0;top:680px" width="1200" height="39" viewBox="0 680 1200 39"><defs><linearGradient id="rg" x1="0" y1="0" x2="0" y2="1"><stop offset="0" stop-color="#EDF5FD"/><stop offset="0.45" stop-color="#DCEBFA"/><stop offset="1" stop-color="#C2DEF7"/></linearGradient></defs><rect x="0" y="680" width="1200" height="39" fill="url(#rg)"/><rect x="0" y="680" width="1200" height="1" fill="#6E6E6E"/><path d="M0.5 681V692M16.5 681V684M31.5 681V684M47.5 681V684M62.5 681V684M78.5 681V688M94.5 681V684M109.5 681V684M125.5 681V684M141.5 681V684M156.5 681V692M172.5 681V684M188.5 681V684M203.5 681V684M219.5 681V684M235.5 681V688M250.5 681V684M266.5 681V684M281.5 681V684M297.5 681V684M313.5 681V692M328.5 681V684M344.5 681V684M360.5 681V684M375.5 681V684M391.5 681V688M407.5 681V684M422.5 681V684M438.5 681V684M454.5 681V684M469.5 681V692M485.5 681V684M501.5 681V684M516.5 681V684M532.5 681V684M547.5 681V688M563.5 681V684M579.5 681V684M594.5 681V684M610.5 681V684M626.5 681V692M641.5 681V684M657.5 681V684M673.5 681V684M688.5 681V684M704.5 681V688M720.5 681V684M735.5 681V684M751.5 681V684M766.5 681V684M782.5 681V692M798.5 681V684M813.5 681V684M829.5 681V684M845.5 681V684M860.5 681V688M876.5 681V684M892.5 681V684M907.5 681V684M923.5 681V684M939.5 681V692M954.5 681V684M970.5 681V684M985.5 681V684M1001.5 681V684M1017.5 681V688M1032.5 681V684M1048.5 681V684M1064.5 681V684M1079.5 681V684M1095.5 681V692M1111.5 681V684M1126.5 681V684M1142.5 681V684" stroke="#6A6A6A" stroke-width="1"/><text x="1.6" y="708.8" font-family="Liberation Sans" font-size="14" fill="#111" stroke="#111" stroke-width="0.55" text-anchor="start">0</text><text x="155.5" y="708.8" font-family="Liberation Sans" font-size="14" fill="#111" stroke="#111" stroke-width="0.55" text-anchor="middle">1</text><text x="312.0" y="708.8" font-family="Liberation Sans" font-size="14" fill="#111" stroke="#111" stroke-width="0.55" text-anchor="middle">2</text><text x="468.4" y="708.8" font-family="Liberation Sans" font-size="14" fill="#111" stroke="#111" stroke-width="0.55" text-anchor="middle">3</text><text x="624.9" y="708.8" font-family="Liberation Sans" font-size="14" fill="#111" stroke="#111" stroke-width="0.55" text-anchor="middle">4</text><text x="781.3" y="708.8" font-family="Liberation Sans" font-size="14" fill="#111" stroke="#111" stroke-width="0.55" text-anchor="middle">5</text><text x="937.7" y="708.8" font-family="Liberation Sans" font-size="14" fill="#111" stroke="#111" stroke-width="0.55" text-anchor="middle">6</text><text x="1094.2" y="708.8" font-family="Liberation Sans" font-size="14" fill="#111" stroke="#111" stroke-width="0.55" text-anchor="middle">7</text><text x="1170" y="705.5" font-family="Liberation Sans" font-size="13.5" fill="#111" stroke="#111" stroke-width="0.6">cm</text></svg>
<div class="a" id="dshadow" style="left:590px;top:47px;width:571px;height:617px;box-shadow:0 1px 11px 1px rgba(35,65,105,.28),4px 3px 12px rgba(35,65,105,.18)"></div>
<div class="a" style="left:590px;top:47px;width:571px;height:617px;background:#F0F0F0;border:1px solid #7a7f86"></div>
<div class="a" style="left:591px;top:48px;width:569px;height:32px;background:#fff"></div>
<svg class="a" style="left:600px;top:56px" width="16" height="16" viewBox="0 0 16 16"><path d="M5.5 1.5h5v4.5h4.5v5h-4.5v4.5h-5v-4.5h-4.5v-5h4.5z" fill="#F00000" stroke="#E00000" stroke-width="0.6" stroke-linejoin="round"/></svg>
<div class="t" style="left:621.0px;top:58.06px;font-size:12.45px;color:#111">Fix Wizard (Part: shell_1_of_4333) &gt; Diagnostics</div>
<div class="a" style="left:1027px;top:62px;width:11px;height:1px;background:#222"></div>
<div class="a" style="left:1078px;top:58px;width:10px;height:10px;border:1px solid #ccc"></div>
<svg class="a" style="left:1128px;top:57px" width="12" height="12" viewBox="0 0 12 12"><path d="M1 1L11 11M11 1L1 11" stroke="#111" stroke-width="1.1"/></svg>
<div class="a" style="left:596px;top:84px;width:131px;height:574px;background:#fff;border:1px solid #9C9C9C;border-right-color:#B8B8B8;border-bottom-color:#C8C8C8;box-shadow:inset 1px 1px 0 #BDBDBD,inset 2px 2px 0 #E6E6E6"></div>
<div class="a" style="left:619px;top:87px;width:100px;height:20px;background:#EEEEEE"></div>
<div class="a" style="left:598px;top:138px;width:121px;height:2px;background:#A8A8A8;border-bottom:1px solid #fff"></div>
<div class="a" style="left:598px;top:305px;width:121px;height:2px;background:#A8A8A8;border-bottom:1px solid #fff"></div>
<div class="t" style="left:621.0px;top:92.05px;font-size:12.7px;color:#111">Diagnostics</div>
<div class="t" style="left:621.0px;top:112.75px;font-size:12.7px;color:#111">Combined Fix</div>
<div class="t" style="left:621.0px;top:154.05px;font-size:12.7px;color:#111">Normals</div>
<div class="t" style="left:621.0px;top:174.95px;font-size:12.7px;color:#111">Stitching</div>
<div class="t" style="left:621.0px;top:195.75px;font-size:12.7px;color:#111">Noise Shells</div>
<div class="t" style="left:621.0px;top:216.65px;font-size:12.7px;color:#111">Holes</div>
<div class="t" style="left:621.0px;top:237.45px;font-size:12.7px;color:#111">Triangles</div>
<div class="t" style="left:621.0px;top:258.35px;font-size:12.7px;color:#111">Overlaps</div>
<div class="t" style="left:621.0px;top:279.05px;font-size:12.7px;color:#111">Shells</div>
<div class="t" style="left:621.0px;top:320.55px;font-size:12.7px;color:#111">Profiles</div>
<svg class="a" style="left:601px;top:88px" width="18" height="18" viewBox="0 0 18 18"><path d="M2 16.5L7.5 10" stroke="#6E6A3A" stroke-width="3.6" stroke-linecap="round"/><path d="M2 16.5L7.5 10" stroke="#B8AE62" stroke-width="2.2" stroke-linecap="round"/><circle cx="11.7" cy="6" r="5" fill="#8EC4EE" stroke="#3F7FBF" stroke-width="1.1"/><circle cx="10.5" cy="4.5" r="2" fill="#D8EEFF"/></svg>
<svg class="a" style="left:603px;top:110px" width="16" height="16" viewBox="0 0 16 16"><path d="M5 3L9 1.5L14.5 3L14 11L10 13Z" fill="#D8DCF4" stroke="#8A90C0" stroke-width="0.6"/><path d="M1.5 4.5L6 3L12 4.5L12 14.5L2 12.5Z" fill="#CDD8F4" stroke="#7E88C0" stroke-width="0.7" stroke-linejoin="round"/><path d="M1.5 4.5L10 6L10 14.5L2 12.5Z" fill="#DCE6FA" stroke="#7E88C0" stroke-width="0.6"/></svg>
<svg class="a" style="left:601.5px;top:151.0px" width="17" height="17" viewBox="0 0 16 16"><path d="M1.3 4.2L7 1.3L15 3.5L9.6 6.5Z" fill="#E8EAFB" stroke="#3E4480" stroke-width="0.8" stroke-linejoin="round"/><path d="M1.3 4.2L9.6 6.5L9.8 15.2L2 12.7Z" fill="#D4D8F6" stroke="#3E4480" stroke-width="0.8" stroke-linejoin="round"/><path d="M9.6 6.5L15 3.5L14.6 12.3L9.8 15.2Z" fill="#CC1E1E" stroke="#3E4480" stroke-width="0.8" stroke-linejoin="round"/></svg>
<svg class="a" style="left:601.5px;top:172.0px" width="17" height="17" viewBox="0 0 16 16"><path d="M1.3 4.2L7 1.3L15 3.5L9.6 6.5Z" fill="#E8EAFB" stroke="#3E4480" stroke-width="0.8" stroke-linejoin="round"/><path d="M1.3 4.2L9.6 6.5L9.8 15.2L2 12.7Z" fill="#D4D8F6" stroke="#3E4480" stroke-width="0.8" stroke-linejoin="round"/><path d="M9.6 6.5L15 3.5L14.6 12.3L9.8 15.2Z" fill="#8088D0" stroke="#3E4480" stroke-width="0.8" stroke-linejoin="round"/><path d="M1.8 4.6L9.6 6.6" stroke="#F0E020" stroke-width="1.6"/></svg>
<svg class="a" style="left:601.5px;top:193.0px" width="17" height="17" viewBox="0 0 16 16"><path d="M1.3 4.2L7 1.3L15 3.5L9.6 6.5Z" fill="#E8EAFB" stroke="#3E4480" stroke-width="0.8" stroke-linejoin="round"/><path d="M1.3 4.2L9.6 6.5L9.8 15.2L2 12.7Z" fill="#D4D8F6" stroke="#3E4480" stroke-width="0.8" stroke-linejoin="round"/><path d="M9.6 6.5L15 3.5L14.6 12.3L9.8 15.2Z" fill="#8088D0" stroke="#3E4480" stroke-width="0.8" stroke-linejoin="round"/><circle cx="5" cy="3.5" r="1.1" fill="#1A1A1A"/><circle cx="10.5" cy="4.2" r="1.1" fill="#1A1A1A"/><circle cx="4.2" cy="8.5" r="1.1" fill="#1A1A1A"/><circle cx="6.8" cy="11.5" r="1.1" fill="#1A1A1A"/><circle cx="12" cy="8.8" r="1.1" fill="#1A1A1A"/><circle cx="12.2" cy="12" r="1.1" fill="#1A1A1A"/></svg>
<svg class="a" style="left:601.5px;top:213.8px" width="17" height="17" viewBox="0 0 16 16"><path d="M1.3 4.2L7 1.3L15 3.5L9.6 6.5Z" fill="#D01828" stroke="#3E4480" stroke-width="0.8" stroke-linejoin="round"/><path d="M1.3 4.2L9.6 6.5L9.8 15.2L2 12.7Z" fill="#D4D8F6" stroke="#3E4480" stroke-width="0.8" stroke-linejoin="round"/><path d="M9.6 6.5L15 3.5L14.6 12.3L9.8 15.2Z" fill="#8088D0" stroke="#3E4480" stroke-width="0.8" stroke-linejoin="round"/></svg>
<svg class="a" style="left:601.5px;top:234.5px" width="17" height="17" viewBox="0 0 16 16"><path d="M1.3 4.2L7 1.3L15 3.5L9.6 6.5Z" fill="#C0BCF0" stroke="#3A3480" stroke-width="0.8" stroke-linejoin="round"/><path d="M1.3 4.2L9.6 6.5L9.8 15.2L2 12.7Z" fill="#A8A4E8" stroke="#3A3480" stroke-width="0.8" stroke-linejoin="round"/><path d="M9.6 6.5L15 3.5L14.6 12.3L9.8 15.2Z" fill="#8A84D8" stroke="#3A3480" stroke-width="0.8" stroke-linejoin="round"/><path d="M2 4.5L8 14M9.6 6.4L12 13" stroke="#4A4490" stroke-width="0.6"/></svg>
<svg class="a" style="left:602px;top:256px" width="16" height="16" viewBox="0 0 16 16"><path d="M1.5 4L6.5 1.5L12 3L7 5.5Z" fill="#D8DCF6" stroke="#50568E" stroke-width="0.6"/><path d="M1.5 4L7 5.5L7 13L2 11.5Z" fill="#B8C0EE" stroke="#50568E" stroke-width="0.6"/><path d="M7 6L12 5L14.5 6.5L14.5 14L9.5 15.5L9.5 8Z" fill="#9098DA" stroke="#50568E" stroke-width="0.6"/></svg>
<svg class="a" style="left:601.5px;top:276.3px" width="17" height="17" viewBox="0 0 16 16"><path d="M1.3 4.2L7 1.3L15 3.5L9.6 6.5Z" fill="#E8EAFB" stroke="#3E4480" stroke-width="0.8" stroke-linejoin="round"/><path d="M1.3 4.2L9.6 6.5L9.8 15.2L2 12.7Z" fill="#D4D8F6" stroke="#3E4480" stroke-width="0.8" stroke-linejoin="round"/><path d="M9.6 6.5L15 3.5L14.6 12.3L9.8 15.2Z" fill="#8088D0" stroke="#3E4480" stroke-width="0.8" stroke-linejoin="round"/></svg>
<svg class="a" style="left:603px;top:317px" width="16" height="16" viewBox="0 0 16 16"><path d="M3 1.5H9.5L13 5V14.5H3Z" fill="#EAF4FC" stroke="#3A90D0" stroke-width="1"/><path d="M9.5 1.5V5H13" fill="#BFE0F6" stroke="#3A90D0" stroke-width="0.8"/><path d="M5 8.2H11M5 10.2H11M5 12.2H9" stroke="#3A90D0" stroke-width="1"/></svg>
<div class="t" style="left:743.0px;top:85.02px;font-size:11.2px;color:#111">Current Part</div>
<div class="a" style="left:821px;top:84px;width:280px;height:21px;background:#E6E6E6;border:1px solid #ADADAD"></div>
<div class="t" style="left:824.5px;top:89.73px;font-size:11.3px;color:#111">shell_1_of_4333</div>
<svg class="a" style="left:1087px;top:90px" width="10" height="8" viewBox="0 0 10 8"><path d="M1 2L5 6L9 2" fill="none" stroke="#444" stroke-width="1"/></svg>
<div class="btn" style="left:1105px;top:85px;width:50px;height:25px"></div>
<div class="t" style="left:1118.0px;top:91.48px;font-size:11.6px;color:#111">Next</div>
<div class="a" style="left:735px;top:119px;width:417px;height:416px;background:linear-gradient(#FDFDFD,#F8F8F8 45%,#F0F0F0);border:1px solid #C8C8C8;border-left-color:#B2B2B2;border-top-color:#CDCDCD;border-radius:3px"></div>
<div class="a" style="left:746px;top:148px;width:394px;height:75px;border:1px solid #DCDCDC;border-top:none"></div>
<div class="a" style="left:746px;top:148px;width:6px;height:1px;background:#DCDCDC"></div>
<div class="a" style="left:788px;top:148px;width:352px;height:1px;background:#DCDCDC"></div>
<div class="t" style="left:754.3px;top:143.16px;font-size:10.8px;color:#111">Advice</div>
<div class="t" style="left:761.0px;top:165.23px;font-size:11.3px;color:#111">No more errors are detected. It seems that the part is ok. Note that</div>
<div class="t" style="left:761.0px;top:179.03px;font-size:11.3px;color:#111">not all parameters were analysed.</div>
<div class="a" style="left:1112px;top:164px;width:17px;height:49px;background:#F0F0F0"></div>
<svg class="a" style="left:1114px;top:168px" width="12" height="40" viewBox="0 0 12 40"><path d="M2 8L6 4L10 8M2 31L6 35L10 31" fill="none" stroke="#B0B0B0" stroke-width="1"/></svg>
<div class="a" style="left:746px;top:235px;width:394px;height:287px;border:1px solid #DCDCDC;border-top:none"></div>
<div class="a" style="left:746px;top:235px;width:6px;height:1px;background:#DCDCDC"></div>
<div class="a" style="left:817px;top:235px;width:323px;height:1px;background:#DCDCDC"></div>
<div class="t" style="left:754.3px;top:228.80px;font-size:11.7px;color:#111">Diagnostics</div>
<div class="cb" style="left:757px;top:252px"></div>
<div class="t" style="left:774.4px;top:253.83px;font-size:11.3px;color:#111">Full Analysis</div>
<div class="cb" style="left:779px;top:284.8px;border-color:#333"></div>
<svg class="a" style="left:779px;top:284.8px" width="14" height="14" viewBox="0 0 14 14"><path d="M2.3 6.8L5.3 10L11.5 3.8" fill="none" stroke="#4A4A4A" stroke-width="1.3"/></svg>
<svg class="a" style="left:800px;top:282.0px" width="16" height="15" viewBox="0 0 16 15"><path d="M0.8 4.3L5.1 8.3L14 1L15 2L4.7 14.7L3.2 13.7L1 7.3Z" fill="#22983E" stroke="#22983E" stroke-width="0.5" stroke-linejoin="round"/></svg>
<div class="t" style="left:822.4px;top:284.47px;font-size:12.2px;font-family:'Liberation Serif',serif;font-weight:bold;color:#000;transform:scaleX(1.22);transform-origin:0 0">0</div>
<div class="t" style="left:871.6px;top:285.40px;font-size:11.1px;color:#111">inverted normals detected</div>
<div class="cb" style="left:779px;top:306.4px;border-color:#333"></div>
<svg class="a" style="left:779px;top:306.4px" width="14" height="14" viewBox="0 0 14 14"><path d="M2.3 6.8L5.3 10L11.5 3.8" fill="none" stroke="#4A4A4A" stroke-width="1.3"/></svg>
<svg class="a" style="left:800px;top:303.6px" width="16" height="15" viewBox="0 0 16 15"><path d="M0.8 4.3L5.1 8.3L14 1L15 2L4.7 14.7L3.2 13.7L1 7.3Z" fill="#22983E" stroke="#22983E" stroke-width="0.5" stroke-linejoin="round"/></svg>
<div class="t" style="left:822.4px;top:306.09px;font-size:12.2px;font-family:'Liberation Serif',serif;font-weight:bold;color:#000;transform:scaleX(1.22);transform-origin:0 0">0</div>
<div class="t" style="left:871.6px;top:307.02px;font-size:11.1px;color:#111">bad edges detected</div>
<svg class="a" style="left:822px;top:325.2px" width="16" height="15" viewBox="0 0 16 15"><path d="M0.8 4.3L5.1 8.3L14 1L15 2L4.7 14.7L3.2 13.7L1 7.3Z" fill="#22983E" stroke="#22983E" stroke-width="0.5" stroke-linejoin="round"/></svg>
<div class="t" style="left:844.4px;top:327.71px;font-size:12.2px;font-family:'Liberation Serif',serif;font-weight:bold;color:#000;transform:scaleX(1.22);transform-origin:0 0">0</div>
<div class="t" style="left:892.5px;top:328.64px;font-size:11.1px;color:#111">bad contours detected</div>
<div class="cb" style="left:801px;top:349.7px;border-color:#333"></div>
<svg class="a" style="left:801px;top:349.7px" width="14" height="14" viewBox="0 0 14 14"><path d="M2.3 6.8L5.3 10L11.5 3.8" fill="none" stroke="#4A4A4A" stroke-width="1.3"/></svg>
<svg class="a" style="left:822px;top:346.9px" width="16" height="15" viewBox="0 0 16 15"><path d="M0.8 4.3L5.1 8.3L14 1L15 2L4.7 14.7L3.2 13.7L1 7.3Z" fill="#22983E" stroke="#22983E" stroke-width="0.5" stroke-linejoin="round"/></svg>
<div class="t" style="left:844.4px;top:349.33px;font-size:12.2px;font-family:'Liberation Serif',serif;font-weight:bold;color:#000;transform:scaleX(1.22);transform-origin:0 0">0</div>
<div class="t" style="left:892.5px;top:350.26px;font-size:11.1px;color:#111">near bad edges detected</div>
<div class="cb" style="left:801px;top:371.3px;border-color:#333"></div>
<svg class="a" style="left:801px;top:371.3px" width="14" height="14" viewBox="0 0 14 14"><path d="M2.3 6.8L5.3 10L11.5 3.8" fill="none" stroke="#4A4A4A" stroke-width="1.3"/></svg>
<svg class="a" style="left:822px;top:368.5px" width="16" height="15" viewBox="0 0 16 15"><path d="M0.8 4.3L5.1 8.3L14 1L15 2L4.7 14.7L3.2 13.7L1 7.3Z" fill="#22983E" stroke="#22983E" stroke-width="0.5" stroke-linejoin="round"/></svg>
<div class="t" style="left:844.4px;top:370.95px;font-size:12.2px;font-family:'Liberation Serif',serif;font-weight:bold;color:#000;transform:scaleX(1.22);transform-origin:0 0">0</div>
<div class="t" style="left:892.5px;top:371.88px;font-size:11.1px;color:#111">planar holes detected</div>
<div class="cb" style="left:779px;top:392.9px;border-color:#333"></div>
<svg class="a" style="left:779px;top:392.9px" width="14" height="14" viewBox="0 0 14 14"><path d="M2.3 6.8L5.3 10L11.5 3.8" fill="none" stroke="#4A4A4A" stroke-width="1.3"/></svg>
<svg class="a" style="left:800px;top:390.1px" width="16" height="15" viewBox="0 0 16 15"><path d="M0.8 4.3L5.1 8.3L14 1L15 2L4.7 14.7L3.2 13.7L1 7.3Z" fill="#22983E" stroke="#22983E" stroke-width="0.5" stroke-linejoin="round"/></svg>
<div class="t" style="left:822.4px;top:392.57px;font-size:12.2px;font-family:'Liberation Serif',serif;font-weight:bold;color:#000;transform:scaleX(1.22);transform-origin:0 0">1</div>
<div class="t" style="left:871.6px;top:393.50px;font-size:11.1px;color:#111">shells detected</div>
<svg class="a" style="left:822px;top:411.7px" width="16" height="15" viewBox="0 0 16 15"><path d="M0.8 4.3L5.1 8.3L14 1L15 2L4.7 14.7L3.2 13.7L1 7.3Z" fill="#22983E" stroke="#22983E" stroke-width="0.5" stroke-linejoin="round"/></svg>
<div class="t" style="left:844.4px;top:414.19px;font-size:12.2px;font-family:'Liberation Serif',serif;font-weight:bold;color:#000;transform:scaleX(1.22);transform-origin:0 0">0</div>
<div class="t" style="left:892.5px;top:415.12px;font-size:11.1px;color:#111">possible noise shells detected</div>
<div class="cb" style="left:779px;top:436.1px;border-color:#333"></div>
<div class="a" style="left:806px;top:441.1px;width:2.6px;height:2.6px;border-radius:50%;background:#1A2AD8"></div>
<div class="t" style="left:871.6px;top:436.74px;font-size:11.1px;color:#111">overlapping triangles detected</div>
<div class="cb" style="left:779px;top:457.8px;border-color:#333"></div>
<div class="a" style="left:806px;top:462.8px;width:2.6px;height:2.6px;border-radius:50%;background:#1A2AD8"></div>
<div class="t" style="left:871.6px;top:458.36px;font-size:11.1px;color:#111">intersecting triangles detected</div>
<div class="a" style="left:1018px;top:487px;width:111px;height:26px;background:#E1E1E1;border:2px solid #0078D7"></div>
<svg class="a" style="left:1020px;top:491px" width="18" height="18" viewBox="0 0 18 18"><path d="M2.2 16L7.5 10.3" stroke="#9A7A30" stroke-width="3" stroke-linecap="round"/><path d="M2.2 16L7.5 10.3" stroke="#F0C048" stroke-width="1.8" stroke-linecap="round"/><circle cx="11.3" cy="6.3" r="4.8" fill="#BFE0F8" stroke="#5A8CB8" stroke-width="1"/><circle cx="10" cy="5" r="1.8" fill="#EAF6FF"/></svg>
<div class="t" style="left:1060.5px;top:494.73px;font-size:11.9px;color:#111">Update</div>
<div class="btn" style="left:835px;top:631px;width:164px;height:28px"></div>
<svg class="a" style="left:838px;top:636px" width="20" height="16" viewBox="0 0 20 16"><path d="M1.5 5.5H9V1.5L18 8L9 14.5V10.5H1.5Z" fill="#5CC43A" stroke="#2E8A1E" stroke-width="1" stroke-linejoin="round"/><path d="M3 7H10V4.5L15 8" fill="none" stroke="#A8E890" stroke-width="1"/></svg>
<div class="t" style="left:887.7px;top:638.40px;font-size:11.7px;color:#111">Follow Advice</div>
<div class="btn" style="left:1005px;top:631px;width:63px;height:27px"></div>
<div class="t" style="left:1021.0px;top:638.10px;font-size:11.7px;color:#111">Close</div>
<div class="btn" style="left:1075px;top:631px;width:63px;height:27px"></div>
<div class="t" style="left:1094.0px;top:638.10px;font-size:11.7px;color:#111">Help</div>
<svg class="a" style="left:1148px;top:651px" width="12" height="12" viewBox="0 0 12 12"><path d="M11 3L3 11M11 7L7 11M11 10L10 11" stroke="#A0A0A0" stroke-width="1"/></svg>

</body></html>
